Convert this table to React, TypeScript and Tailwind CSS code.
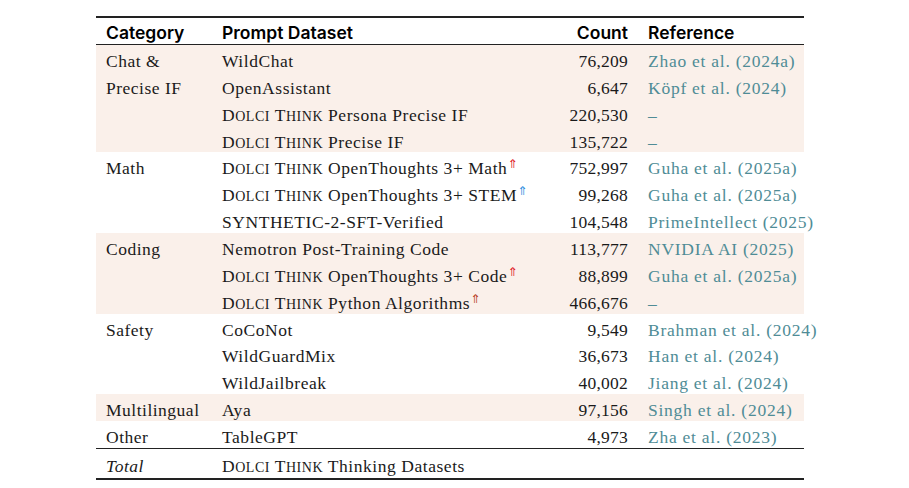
type Row = {
  cat?: string;
  name: React.ReactNode;
  count: string;
  refText: string;
};

type Group = { tint: boolean; rows: Row[] };

function SmallCaps({ first, rest }: { first: string; rest: string }) {
  return (
    <>
      {first}
      <span className="text-[0.8em]">{rest}</span>
    </>
  );
}

function Dolci({ suffix }: { suffix: string }) {
  return (
    <>
      <SmallCaps first="D" rest="OLCI" /> <SmallCaps first="T" rest="HINK" /> {suffix}
    </>
  );
}

function Arrow({ color }: { color: string }) {
  return (
    <span
      className="relative top-[-6px] inline-block text-[12px] leading-none tracking-normal [font-family:'DejaVu_Sans',sans-serif]"
      style={{ color }}
    >
      ⇑
    </span>
  );
}

const groups: Group[] = [
  {
    tint: true,
    rows: [
      { cat: "Chat &", name: "WildChat", count: "76,209", refText: "Zhao et al. (2024a)" },
      { cat: "Precise IF", name: "OpenAssistant", count: "6,647", refText: "Köpf et al. (2024)" },
      { name: <Dolci suffix="Persona Precise IF" />, count: "220,530", refText: "–" },
      { name: <Dolci suffix="Precise IF" />, count: "135,722", refText: "–" },
    ],
  },
  {
    tint: false,
    rows: [
      {
        cat: "Math",
        name: (
          <>
            <Dolci suffix="OpenThoughts 3+ Math" />
            <Arrow color="#e0202a" />
          </>
        ),
        count: "752,997",
        refText: "Guha et al. (2025a)",
      },
      {
        name: (
          <>
            <Dolci suffix="OpenThoughts 3+ STEM" />
            <Arrow color="#2f8fe0" />
          </>
        ),
        count: "99,268",
        refText: "Guha et al. (2025a)",
      },
      { name: "SYNTHETIC-2-SFT-Verified", count: "104,548", refText: "PrimeIntellect (2025)" },
    ],
  },
  {
    tint: true,
    rows: [
      { cat: "Coding", name: "Nemotron Post-Training Code", count: "113,777", refText: "NVIDIA AI (2025)" },
      {
        name: (
          <>
            <Dolci suffix="OpenThoughts 3+ Code" />
            <Arrow color="#e0202a" />
          </>
        ),
        count: "88,899",
        refText: "Guha et al. (2025a)",
      },
      {
        name: (
          <>
            <Dolci suffix="Python Algorithms" />
            <Arrow color="#b8401f" />
          </>
        ),
        count: "466,676",
        refText: "–",
      },
    ],
  },
  {
    tint: false,
    rows: [
      { cat: "Safety", name: "CoCoNot", count: "9,549", refText: "Brahman et al. (2024)" },
      { name: "WildGuardMix", count: "36,673", refText: "Han et al. (2024)" },
      { name: "WildJailbreak", count: "40,002", refText: "Jiang et al. (2024)" },
    ],
  },
  {
    tint: true,
    rows: [{ cat: "Multilingual", name: "Aya", count: "97,156", refText: "Singh et al. (2024)" }],
  },
  {
    tint: false,
    rows: [{ cat: "Other", name: "TableGPT", count: "4,973", refText: "Zha et al. (2023)" }],
  },
];

const cols = "grid grid-cols-[116px_346px_80px_166px]";

export default function App() {
  return (
    <div className="h-[488px] w-full overflow-hidden bg-white pt-[16px]">
      <div className="ml-[96px] w-[708px] border-t-2 border-[#222] text-[17.5px] text-[#1a1a1a] [font-family:'Liberation_Serif',serif]">
        <div
          className={`${cols} h-[27px] items-center border-b border-[#222] pt-[2px] text-[17.5px] font-semibold text-black [font-family:Inter,sans-serif]`}
        >
          <div className="px-[10px]">Category</div>
          <div className="px-[10px]">Prompt Dataset</div>
          <div className="px-[10px] text-right">Count</div>
          <div className="px-[10px]">Reference</div>
        </div>

        {groups.map((g, gi) => (
          <div key={gi} className={g.tint ? "bg-[#faf0ea]" : "bg-white"}>
            {g.rows.map((r, ri) => (
              <div key={ri} className={`${cols} h-[26.86px] items-center pt-[3px]`}>
                <div className="whitespace-nowrap px-[10px] tracking-[0.5px]">{r.cat}</div>
                <div className="whitespace-nowrap px-[10px] tracking-[0.55px]">{r.name}</div>
                <div className="px-[10px] text-right tracking-[0.25px]">{r.count}</div>
                <div className="whitespace-nowrap px-[10px] tracking-[0.75px] text-[#4f8c96]">{r.refText}</div>
              </div>
            ))}
          </div>
        ))}

        <div className={`${cols} h-[32px] items-center border-t border-b-2 border-[#222] pt-[4px]`}>
          <div className="px-[10px] italic tracking-[0.5px]">Total</div>
          <div className="whitespace-nowrap px-[10px] tracking-[0.55px]">
            <Dolci suffix="Thinking Datasets" />
          </div>
          <div className="px-[10px]" />
          <div className="px-[10px]" />
        </div>
      </div>
    </div>
  );
}
